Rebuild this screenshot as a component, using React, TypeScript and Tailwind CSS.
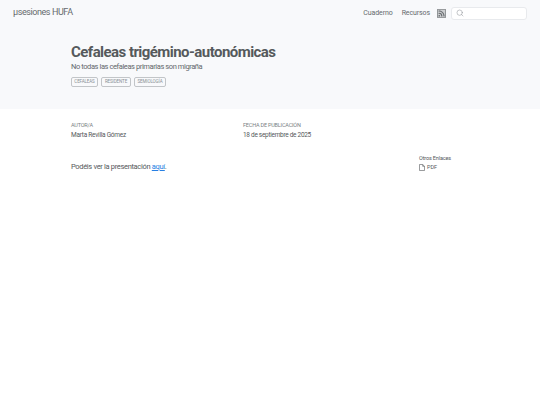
import React from "react";
import { Search } from "lucide-react";

function Tag({ children, w }: { children: React.ReactNode; w: string }) {
  return (
    <span className={`${w} border border-[#c2c5c8] rounded-[2px] h-[10px] flex items-center justify-center text-[4.5px] tracking-[-0.1px] leading-none text-[#8a9096]`}>
      {children}
    </span>
  );
}

export default function App() {
  return (
    <div className="w-[540px] h-[405px] bg-white text-[#55595c] font-['Roboto',sans-serif] overflow-hidden">
      <div className="bg-[#f8f9fb] h-[109px]">
        <header className="h-[26px] flex items-center pl-[13px] pr-[13px]">
          <span className="text-[9px] tracking-[-0.42px] text-[#666a6d]">µsesiones HUFA</span>
          <div className="ml-auto flex items-center text-[7px] tracking-[-0.1px] text-[#666a6d]">
            <span>Cuaderno</span>
            <span className="ml-[9px]">Recursos</span>
            <svg viewBox="0 0 16 16" className="ml-[7px] w-[9px] h-[9px] text-[#666a6d]" fill="currentColor">
              <rect x="0" y="0" width="16" height="16" rx="2" opacity="0.3" />
              <path d="M14 1a1 1 0 0 1 1 1v12a1 1 0 0 1-1 1H2a1 1 0 0 1-1-1V2a1 1 0 0 1 1-1h12zM2 0a2 2 0 0 0-2 2v12a2 2 0 0 0 2 2h12a2 2 0 0 0 2-2V2a2 2 0 0 0-2-2H2z" />
              <path d="M5.5 12a1.5 1.5 0 1 1-3 0 1.5 1.5 0 0 1 3 0zm-3-8.5a1 1 0 0 1 1-1c5.523 0 10 4.477 10 10a1 1 0 1 1-2 0 8 8 0 0 0-8-8 1 1 0 0 1-1-1zm0 4a1 1 0 0 1 1-1 6 6 0 0 1 6 6 1 1 0 1 1-2 0 4 4 0 0 0-4-4 1 1 0 0 1-1-1z" />
            </svg>
            <span className="ml-[5px] w-[76px] h-[13px] bg-white border border-[#e8eaed] rounded-[3px] flex items-center pl-[4px]">
              <Search className="w-[8px] h-[8px] text-[#8a8f94]" strokeWidth={1.5} />
            </span>
          </div>
        </header>
        <section className="pl-[71px] pt-[16px]">
          <h1 className="text-[15px] tracking-[-0.55px] font-bold text-[#55595c] leading-[20px]">Cefaleas trigémino-autonómicas</h1>
          <p className="text-[7.5px] tracking-[-0.41px] text-[#63686c] leading-[10px]">No todas las cefaleas primarias son migraña</p>
          <div className="flex gap-[3px] mt-[5px]">
            <Tag w="w-[27px]">CEFALEAS</Tag>
            <Tag w="w-[30px]">RESIDENTE</Tag>
            <Tag w="w-[32px]">SEMIOLOGÍA</Tag>
          </div>
        </section>
      </div>
      <section className="flex pl-[71px] pt-[12px]">
        <div className="w-[172px]">
          <div className="text-[5.5px] tracking-[-0.2px] leading-[8px] text-[#7a7f84]">AUTOR/A</div>
          <div className="text-[6.5px] tracking-[-0.26px] leading-[9px] mt-[2px]">Marta Revilla Gómez</div>
        </div>
        <div>
          <div className="text-[5.5px] tracking-[-0.2px] leading-[8px] text-[#7a7f84]">FECHA DE PUBLICACIÓN</div>
          <div className="text-[6.5px] tracking-[-0.3px] leading-[9px] mt-[2px]">18 de septiembre de 2025</div>
        </div>
      </section>
      <section className="flex pl-[71px] pt-[14px]">
        <p className="w-[348px] text-[7.5px] tracking-[-0.33px] leading-[12px] pt-[7px]">
          Podéis ver la presentación <span className="text-[#2780e3] underline">aquí</span>.
        </p>
        <div>
          <div className="text-[5.5px] tracking-[-0.15px] leading-[8px]">Otros Enlaces</div>
          <div className="text-[5.5px] leading-[8px] mt-[1px] flex items-center">
            <svg viewBox="0 0 6 7" className="w-[6px] h-[7px]" fill="none" stroke="currentColor" strokeWidth="0.6">
              <path d="M0.5 0.5H3.7L5.5 2.3V6.5H0.5Z" />
              <path d="M3.7 0.5V2.3H5.5" />
            </svg>
            <span className="ml-[2px]">PDF</span>
          </div>
        </div>
      </section>
    </div>
  );
}
